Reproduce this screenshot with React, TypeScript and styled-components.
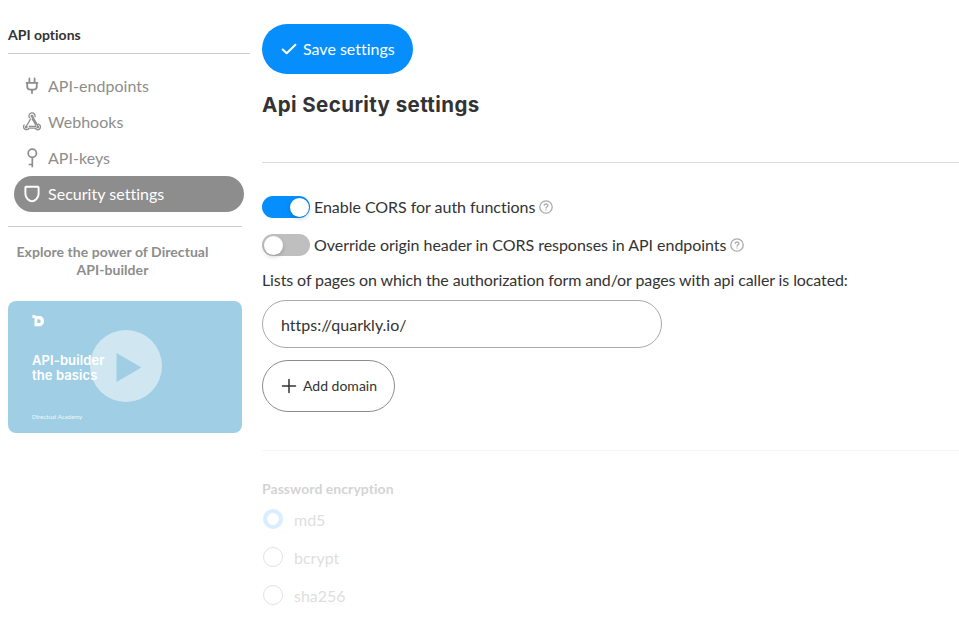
import React from "react";
import styled, { createGlobalStyle } from "styled-components";

const GlobalStyle = createGlobalStyle`
  *, *::before, *::after { box-sizing: border-box; }
  body {
    margin: 0;
    background: #fff;
    color: #333;
    font: 16px/20px Lato, sans-serif;
    font-variant-ligatures: none;
    overflow: hidden;
  }
  button, input { font: inherit; color: inherit; margin: 0; font-variant-ligatures: none; }
`;

const Page = styled.div`
  display: grid;
  grid-template-columns: 242px minmax(0, 1fr);
  column-gap: 12px;
  height: 634px;
  padding-left: 8px;
  overflow: hidden;
`;

const Sidebar = styled.aside`
  padding-top: 25px;
`;

const SidebarTitle = styled.h2`
  margin: 0;
  height: 29px;
  border-bottom: 1px solid #ccc;
  font-size: 14px;
  line-height: 20px;
  font-weight: 700;
`;

const Nav = styled.nav`
  width: 234px;
  margin-top: 14px;
  padding: 0 0 0 6px;
  display: flex;
  flex-direction: column;
`;

const NavItem = styled.a<{ $active?: boolean }>`
  width: 230px;
  height: 36px;
  padding: 0 8px;
  display: flex;
  align-items: center;
  gap: 6px;
  border-radius: 18px;
  color: ${(p) => (p.$active ? "#fff" : "#8d8d8d")};
  background: ${(p) => (p.$active ? "#8d8d8d" : "transparent")};
  letter-spacing: 0.03px;

  svg { flex: none; }
`;

const Promo = styled.section`
  width: 234px;
  margin-top: 14px;
  border-top: 1px solid #ccc;
`;

const PromoText = styled.p`
  width: 209px;
  margin: 16px 0 0;
  color: #8d8d8d;
  font-size: 14px;
  line-height: 18px;
  font-weight: 700;
  letter-spacing: 0.05px;
  text-align: center;
  white-space: nowrap;
`;

const Thumbnail = styled.div`
  position: relative;
  width: 234px;
  height: 132px;
  margin-top: 22px;
  padding: 13px 24px;
  border-radius: 8px;
  background: #a0cfe5;
  color: #fff;
  overflow: hidden;
`;

const Logo = styled.svg`
  display: block;
`;

const ThumbTitle = styled.div`
  margin-top: 26px;
  font: 600 13px/14.5px Inter, sans-serif;
  letter-spacing: 0.1px;
  white-space: nowrap;
`;

const ThumbCaption = styled.div`
  margin-top: 29px;
  font-size: 6px;
  line-height: 12px;
  letter-spacing: 0.04px;
  opacity: 0.85;
`;

const Play = styled.svg`
  position: absolute;
  left: 82px;
  top: 28px;
`;

const Main = styled.main`
  padding-top: 24px;
`;

const SaveButton = styled.button`
  width: 151px;
  height: 50px;
  padding: 0 0 0 18px;
  display: flex;
  align-items: center;
  gap: 5px;
  border: 0;
  border-radius: 25px;
  background: #058efc;
  color: #fff;
  white-space: nowrap;
`;

const Heading = styled.h1`
  height: 89px;
  margin: 0;
  padding-top: 17px;
  border-bottom: 1px solid #ddd;
  font: 700 20.5px/28px Inter, sans-serif;
  letter-spacing: 0.41px;
`;

const ToggleRow = styled.div`
  height: 22px;
  margin-bottom: 16px;
  display: flex;
  align-items: center;
  gap: 4px;
  white-space: nowrap;

  svg { flex: none; margin-left: -0.5px; }
`;

const Settings = styled.section`
  padding-top: 33px;
`;

const Switch = styled.span<{ $on?: boolean }>`
  width: 48px;
  height: 22px;
  padding: 1.5px;
  display: flex;
  flex: none;
  justify-content: ${(p) => (p.$on ? "flex-end" : "flex-start")};
  border-radius: 11px;
  background: ${(p) => (p.$on ? "#058efc" : "#bfbfbf")};

  &::after {
    content: "";
    width: 19px;
    height: 19px;
    border-radius: 50%;
    background: #fff;
    box-shadow: 0 2px 4px rgba(0, 35, 11, 0.2);
  }
`;

const ToggleLabel = styled.span`
  letter-spacing: -0.04px;
`;

const FieldLabel = styled.label`
  display: block;
  margin-top: -2px;
  letter-spacing: -0.105px;
  white-space: nowrap;
`;

const DomainInput = styled.input`
  display: block;
  width: 400px;
  height: 48px;
  margin-top: 10px;
  padding: 0 18px;
  border: 1px solid #aaa;
  border-radius: 24px;
  background: #fff;
  outline: 0;
`;

const AddButton = styled.button`
  width: 133px;
  height: 52px;
  margin-top: 12px;
  padding: 0 0 0 18px;
  display: flex;
  align-items: center;
  gap: 6px;
  border: 1px solid #8d8d8d;
  border-radius: 26px;
  background: #fff;
  font-size: 14px;
  white-space: nowrap;
`;

const Encryption = styled.section`
  margin-top: 38px;
  padding-top: 28px;
  border-top: 1px solid #ddd;
  opacity: 0.25;
`;

const GroupTitle = styled.h3`
  margin: 0 0 10px;
  color: #555;
  font-size: 14px;
  line-height: 20px;
  font-weight: 700;
  letter-spacing: 0.05px;
`;

const RadioRow = styled.div`
  height: 20px;
  margin: 0 0 18px 1px;
  display: flex;
  align-items: center;
  gap: 11px;
  color: #7f7f7f;
`;

const Radio = styled.span<{ $checked?: boolean }>`
  width: 20px;
  height: 20px;
  border-radius: 50%;
  border: ${(p) => (p.$checked ? "4px solid #66b9ff" : "1px solid #8d8d8d")};
`;

const RadioLabel = styled.span`
  padding-top: 1px;
`;

const stroke = {
  fill: "none",
  stroke: "currentColor",
  strokeLinecap: "round",
  strokeLinejoin: "round",
} as const;

const PlugIcon = () => (
  <svg width="20" height="20" {...stroke} strokeWidth="1.8">
    <path d="M7.4 2.5V6M12.6 2.5V6M4.5 6.8H15.5M5.2 6.8V10.5Q5.2 13.7 8.5 13.7H11.5Q14.8 13.7 14.8 10.5V6.8M10 13.7V17" />
  </svg>
);

const HookIcon = () => (
  <svg width="20" height="20" {...stroke} strokeWidth="1.3">
    <path d="M7.4 5.7A3.1 3.1 0 1 1 13 4.9M2.2 12.9A2.9 2.9 0 1 0 7 16.1H14.2M16.4 12.1A2.9 2.9 0 1 1 13.5 16.9" />
    <path d="M10.5 4.7L15.7 13.4M8.5 7L4.3 14.5M7.2 14.3H13.8M10.2 6.8L13.9 13.2" />
    <circle cx="10" cy="4.3" r="0.8" />
    <circle cx="4.2" cy="15.1" r="0.8" />
    <circle cx="15.9" cy="15.1" r="0.8" />
  </svg>
);

const KeyIcon = () => (
  <svg width="20" height="20" {...stroke} strokeWidth="1.7">
    <circle cx="10.3" cy="5.3" r="4.1" />
    <path d="M10.3 9.5V18.5M10.3 16.5H7.4" />
  </svg>
);

const ShieldIcon = () => (
  <svg width="20" height="20" {...stroke} strokeWidth="1.9">
    <path d="M4.2 2.8H15.8Q16.6 2.8 16.6 3.6V10C16.6 14.3 12.6 17.2 10 17.2S3.4 14.3 3.4 10V3.6Q3.4 2.8 4.2 2.8Z" />
  </svg>
);

const HelpIcon = () => (
  <svg width="14" height="14" fill="none" stroke="#aaa">
    <circle cx="7" cy="7" r="6.2" strokeWidth="1.3" />
    <path d="M5.1 5.8C5.1 3.4 8.9 3.5 8.9 5.6C8.9 6.8 7 6.9 7 8.4M7 9.5V10.6" strokeWidth="1.3" />
  </svg>
);

const CheckIcon = () => (
  <svg width="18" height="18" {...stroke} strokeWidth="2">
    <path d="M2.7 9.5L6.7 13.2L15.4 4.7" />
  </svg>
);

const PlusIcon = () => (
  <svg width="16" height="16" {...stroke} strokeWidth="1.5">
    <path d="M8 1.5V14.5M1.5 8H14.5" />
  </svg>
);

const navItems = [
  { label: "API-endpoints", icon: <PlugIcon /> },
  { label: "Webhooks", icon: <HookIcon /> },
  { label: "API-keys", icon: <KeyIcon /> },
  { label: "Security settings", icon: <ShieldIcon />, active: true },
];

const toggles = [
  { label: "Enable CORS for auth functions", on: true },
  { label: "Override origin header in CORS responses in API endpoints", on: false },
];

export default function App() {
  return (
    <>
      <GlobalStyle />
      <Page>
        <Sidebar>
          <SidebarTitle>API options</SidebarTitle>
          <Nav>
            {navItems.map((item) => (
              <NavItem key={item.label} $active={item.active}>
                {item.icon}
                {item.label}
              </NavItem>
            ))}
          </Nav>
          <Promo>
            <PromoText>
              Explore the power of Directual
              <br />
              API-builder
            </PromoText>
            <Thumbnail>
              <Logo width="13" height="13">
                <path
                  fill="#fff"
                  fillRule="evenodd"
                  d="M0.5 1H3.5V2H7C10 2 12 4 12 7S10 12.3 7 12.3H2.5V4H0.5ZM5.3 5.2V9.1H7.3Q8.7 8.8 8.7 7.2T7.3 5.2Z"
                />
              </Logo>
              <ThumbTitle>
                API-builder
                <br />
                the basics
              </ThumbTitle>
              <ThumbCaption>Directual Academy</ThumbCaption>
              <Play width="72" height="74">
                <path
                  fill="#fff"
                  fillOpacity="0.5"
                  fillRule="evenodd"
                  d="M36 1A36 36 0 1 1 36 73A36 36 0 1 1 36 1ZM26.5 24V53L51.5 38.5Z"
                />
              </Play>
            </Thumbnail>
          </Promo>
        </Sidebar>
        <Main>
          <SaveButton>
            <CheckIcon />
            Save settings
          </SaveButton>
          <Heading>Api Security settings</Heading>
          <Settings>
            {toggles.map((t) => (
              <ToggleRow key={t.label}>
                <Switch $on={t.on} />
                <ToggleLabel>{t.label}</ToggleLabel>
                <HelpIcon />
              </ToggleRow>
            ))}
            <FieldLabel htmlFor="domain">
              Lists of pages on which the authorization form and/or pages with api caller is located:
            </FieldLabel>
            <DomainInput id="domain" defaultValue="https://quarkly.io/" />
            <AddButton>
              <PlusIcon />
              Add domain
            </AddButton>
          </Settings>
          <Encryption>
            <GroupTitle>Password encryption</GroupTitle>
            {["md5", "bcrypt", "sha256"].map((name, i) => (
              <RadioRow key={name}>
                <Radio $checked={i === 0} />
                <RadioLabel>{name}</RadioLabel>
              </RadioRow>
            ))}
          </Encryption>
        </Main>
      </Page>
    </>
  );
}
